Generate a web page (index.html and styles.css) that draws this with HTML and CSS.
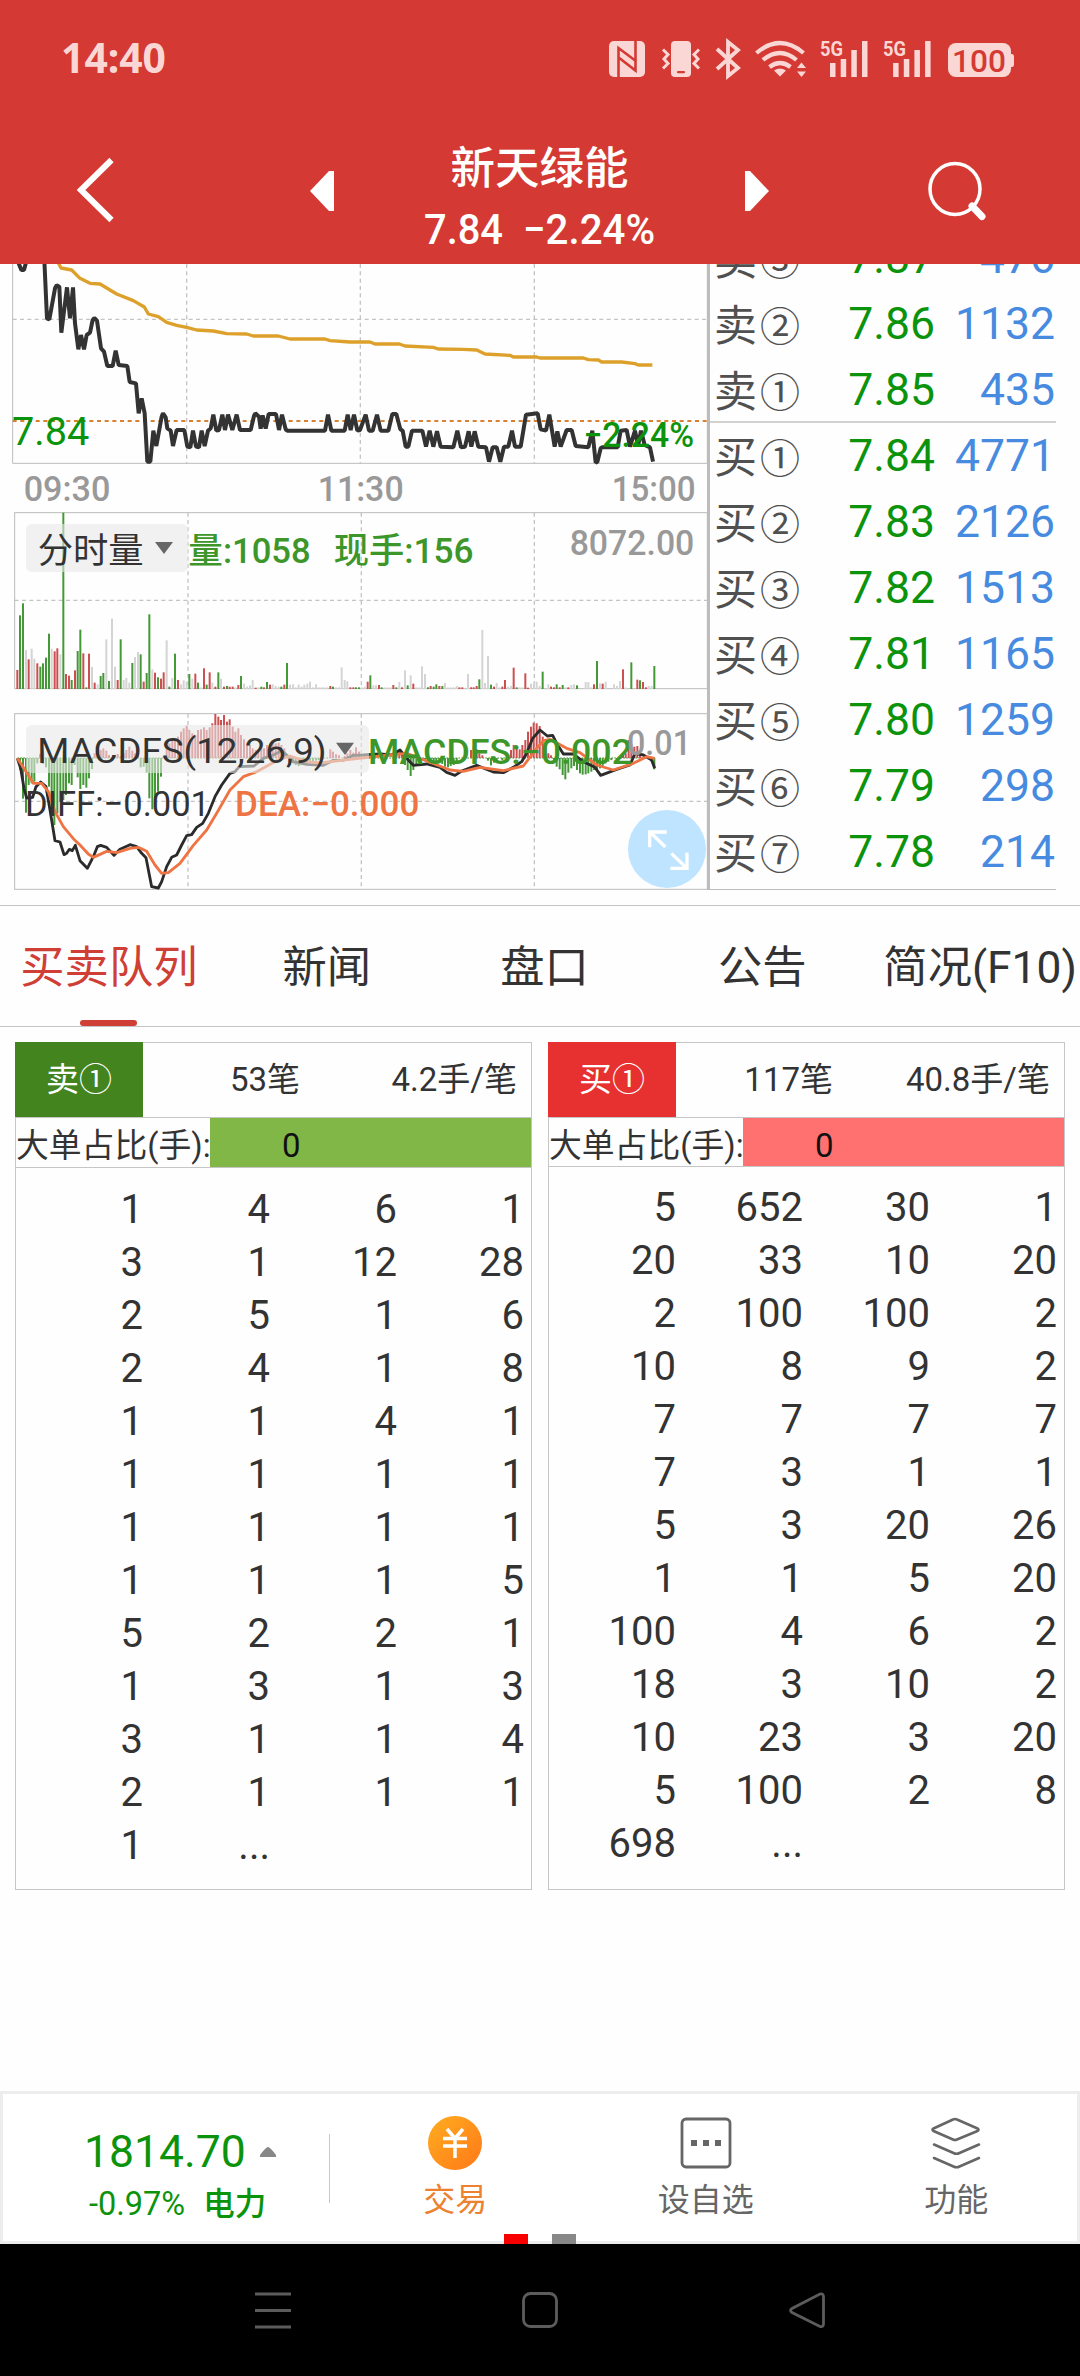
FILE: index.html
```html
<!DOCTYPE html>
<html lang="zh-CN">
<head>
<meta charset="utf-8">
<title>新天绿能</title>
<link rel="stylesheet" href="styles.css">
</head>
<body>
<div class="app">
  <header class="header">
    <div class="status">
      <svg class="clock" viewBox="0 0 110 40"><text x="0" y="32.500" textLength="105" lengthAdjust="spacingAndGlyphs">14:40</text></svg>
      <svg class="status-icons" viewBox="609 38 406 42" fill="#fad7d5">
        <rect x="609" y="41" width="36" height="36" rx="5"/>
        <path d="M618.500 77V48l18 13.500M635.500 41v29.500L618 57" fill="none" stroke="#d43a33" stroke-width="2.600"/>
        <rect x="671" y="41" width="20" height="36" rx="4"/><rect x="677" y="71" width="8" height="2.200" rx="1" fill="#d43a33"/>
        <path d="M663 49.500l5 5-4 4.500 4 4.500-5 5M699 49.500l-5 5 4 4.500-4 4.500 5 5" fill="none" stroke="#fad7d5" stroke-width="3"/>
        <path d="M717 49l21 19-10 8V42l10 8-21 19" fill="none" stroke="#fad7d5" stroke-width="3.800"/>
        <g fill="none" stroke="#fad7d5" stroke-width="4.200"><path d="M756.500 53q23.500-20 47 0M763 60q17-14 33.500 0M769.500 67q10.500-8 21 0"/></g>
        <path d="M774 70.500q6-4 12 0l-6 6z M797 68l4.500-5.500 4.500 5.500zM797 71.500l4.500 5.500 4.500-5.500z"/>
        <g id="signal"><text x="820" y="55.800" font-size="21" font-weight="700" textLength="23" lengthAdjust="spacingAndGlyphs">5G</text>
        <path d="M830 63h5.500v14H830zM840.700 59h5.500v18h-5.500zM851.300 50h5.500v27h-5.500zM862 41h5.500v36H862z"/></g>
        <use href="#signal" x="63.100"/>
        <rect x="948" y="43" width="63" height="34" rx="8"/><path d="M1010 54h2q2 0 2 2.500v7.500q0 3-2 3h-2z"/>
        <text x="952" y="71.500" font-size="32" font-weight="500" fill="#d43a33" textLength="54" lengthAdjust="spacingAndGlyphs">100</text>
      </svg>
    </div>
    <div class="title-bar">
      <svg class="back" viewBox="0 0 40 68"><path d="M36.500 4L6 34l30.500 30" fill="none" stroke="#fff" stroke-width="6"/></svg>
      <svg class="arrow" viewBox="0 0 24 40"><path d="M24 0v40h-5L0 20 19 0z" fill="#fff"/></svg>
      <div class="stock">
        <div class="stock-name">新天绿能</div>
        <svg class="stock-price" viewBox="0 0 232 40"><text x="0" y="34.500" textLength="79" lengthAdjust="spacingAndGlyphs">7.84</text><text x="99" y="34.500" textLength="132" lengthAdjust="spacingAndGlyphs">−2.24%</text></svg>
      </div>
      <svg class="arrow" viewBox="0 0 24 40"><path d="M0 0v40h5l19-20L5 0z" fill="#fff"/></svg>
      <svg class="search" viewBox="0 0 58 58"><ellipse cx="27" cy="27" rx="25" ry="25.500" fill="none" stroke="#fff" stroke-width="3.500"/><path d="M44 44l10 10.500" stroke="#fff" stroke-width="7" stroke-linecap="round"/></svg>
    </div>
  </header>

  <main class="quote">
    <section class="charts">
      <svg class="price-chart" viewBox="0 12 2130 738">
        <g class="grid"><path d="M560 12V610M1081 12V610M1603 12V610M38 178H2120"/></g>
        <path class="frame" d="M38 0V610H2122V0"/>
        <path d="M38 483H2120" fill="none" stroke="#d9812f" stroke-width="6" stroke-dasharray="12 11"/>
        <text x="36" y="555" class="quote-low" textLength="232" lengthAdjust="spacingAndGlyphs">7.84</text>
        <polyline class="average" points="170,0 183,24 215,30 240,55 270,70 300,72 350,102 400,122 433,141 445,162 475,170 500,187 530,196 560,202 590,210 640,213 680,221 740,222 760,228 835,228 870,237 975,237 990,242 1050,246 1110,246 1125,252 1198,252 1215,258 1300,262 1315,267 1390,268 1430,270 1455,282 1530,286 1540,291 1610,291 1620,294 1750,294 1765,299 1795,300 1805,306 1865,306 1905,311 1915,315 1957,315"/>
        <polyline class="price" points="52,0 64,30 72,30 80,0 133,0 141,176 148,178 165,85 170,76 178,80 184,218 201,82 210,175 219,82 225,190 235,268 243,225 252,268 260,225 270,218 278,180 283,174 291,182 303,265 312,275 322,318 338,318 347,272 356,315 382,318 389,366 408,370 416,460 425,415 434,460 442,605 451,605 460,512 469,558 485,470 489,460 497,472 502,505 512,512 519,558 530,510 553,510 562,560 571,562 579,512 588,560 597,562 605,512 614,558 624,512 632,505 640,464 649,512 657,510 667,464 675,510 684,464 697,510 710,464 720,510 752,510 762,468 766,460 777,470 782,506 788,466 797,506 806,462 828,462 837,510 846,464 857,508 862,512 975,512 984,464 994,512 1034,512 1043,464 1052,510 1062,464 1072,512 1080,510 1097,464 1107,512 1118,512 1131,464 1142,512 1165,512 1177,462 1189,462 1201,508 1208,512 1217,560 1225,560 1236,512 1267,512 1278,560 1289,512 1300,560 1311,514 1322,560 1360,562 1372,512 1383,562 1395,560 1406,514 1414,560 1424,514 1435,560 1458,562 1467,605 1478,562 1490,562 1501,605 1512,560 1525,560 1536,512 1545,560 1562,560 1578,464 1613,460 1622,508 1638,512 1648,464 1664,560 1672,514 1682,560 1700,510 1715,510 1727,558 1765,562 1777,512 1787,608 1792,606 1802,565 1807,562 1853,562 1862,512 1880,510 1890,560 1905,512 1914,558 1923,512 1934,555 1950,562 1959,605"/>
        <text x="1750" y="560" class="green medium" textLength="332" lengthAdjust="spacingAndGlyphs">−2.24%</text>
        <g class="axis"><text x="71" y="722" textLength="260" lengthAdjust="spacingAndGlyphs">09:30</text><text x="953" y="722" textLength="258" lengthAdjust="spacingAndGlyphs">11:30</text><text x="1835" y="722" textLength="252" lengthAdjust="spacingAndGlyphs">15:00</text></g>
      </svg>

      <svg class="volume-chart" viewBox="0 30 2130 570">
        <g class="grid"><path d="M564 38V566M1084 38V566M1603 38V566M44 301H2122"/></g>
        <rect class="frame" x="44" y="38" width="2078" height="528"/>
        <g id="volume-bars"></g>
        <rect class="pill" x="78" y="72" width="487" height="144"/>
        <text x="113" y="188" class="dark" font-size="106">分时量</text>
        <path d="M465 126h54l-27 36z" fill="#666"/>
        <g class="green-bright medium"><text x="565" y="188" textLength="367" lengthAdjust="spacingAndGlyphs">量:1058</text><text x="1001" y="188" textLength="420" lengthAdjust="spacingAndGlyphs">现手:156</text></g>
        <text x="1709" y="164" class="axis" textLength="374" lengthAdjust="spacingAndGlyphs">8072.00</text>
      </svg>

      <svg class="macd-chart" viewBox="0 30 2130 570">
        <g class="grid"><path d="M564 71V590M1084 71V590M1603 71V590M44 334H2122"/></g>
        <rect class="frame" x="44" y="71" width="2078" height="527"/>
        <path d="M52 204H1965" stroke="#3d9629" stroke-width="3" stroke-dasharray="5 4"/>
        <g id="macd-bars"></g>
        <polyline class="diff" points="52,205 62,235 72,295 80,324 98,322 108,290 122,276 138,290 150,360 165,452 180,456 192,494 200,490 208,478 217,482 226,466 240,512 262,535 280,500 292,470 302,466 320,472 342,496 360,478 390,464 410,470 425,490 438,503 455,590 475,594 485,575 500,530 515,502 530,495 545,465 560,437 575,434 590,412 608,400 625,370 645,320 665,285 690,250 705,245 718,230 762,228 790,205 820,195 845,182 865,200 880,215 920,223 970,226 1000,211 1030,211 1060,196 1090,195 1140,192 1175,195 1200,180 1220,205 1240,226 1280,222 1320,232 1340,247 1365,256 1385,243 1430,226 1480,246 1510,248 1540,232 1565,215 1580,190 1598,145 1620,120 1642,138 1658,136 1670,160 1690,192 1720,192 1750,215 1785,232 1802,256 1850,238 1890,225 1905,190 1930,195 1955,210 1964,235"/>
        <polyline class="dea" points="52,205 75,240 100,280 125,280 145,305 165,365 190,410 220,446 240,465 265,492 280,502 320,484 350,488 390,475 415,472 440,484 465,525 485,550 505,548 540,520 580,466 620,420 650,370 690,300 730,260 770,245 830,212 870,198 920,215 960,219 1050,208 1140,198 1220,190 1280,213 1350,240 1390,244 1440,232 1510,242 1570,228 1610,175 1630,152 1650,148 1700,175 1740,188 1790,225 1840,240 1900,220 1940,200 1964,205"/>
        <rect class="pill" x="78" y="105" width="1029" height="144"/>
        <text x="112" y="218" class="dark" textLength="868" lengthAdjust="spacingAndGlyphs">MACDFS(12,26,9)</text>
        <path d="M1008 158h54l-27 37z" fill="#666"/>
        <text x="1104" y="222" class="green-bright medium" textLength="792" lengthAdjust="spacingAndGlyphs">MACDFS:−0.002</text>
        <text x="1881" y="196" class="axis" textLength="192" lengthAdjust="spacingAndGlyphs">0.01</text>
        <text x="75" y="377" class="dark" textLength="555" lengthAdjust="spacingAndGlyphs">DIFF:−0.001</text>
        <text x="705" y="377" class="orange medium" textLength="553" lengthAdjust="spacingAndGlyphs">DEA:−0.000</text>
        <circle cx="2001" cy="477" r="117" fill="#bfe4ff"/>
        <path d="M1996 471l-46-45M1949 472v-46h51M2014 490l46 44M2061 488v47h-50" fill="none" stroke="#fff" stroke-width="10"/>
      </svg>
    </section>

    <section class="book">
      <div class="row"><span>卖<em>③</em></span><b>7.87</b><i>476</i></div>
      <div class="row"><span>卖<em>②</em></span><b>7.86</b><i>1132</i></div>
      <div class="row split"><span>卖<em>①</em></span><b>7.85</b><i>435</i></div>
      <div class="row"><span>买<em>①</em></span><b>7.84</b><i>4771</i></div>
      <div class="row"><span>买<em>②</em></span><b>7.83</b><i>2126</i></div>
      <div class="row"><span>买<em>③</em></span><b>7.82</b><i>1513</i></div>
      <div class="row"><span>买<em>④</em></span><b>7.81</b><i>1165</i></div>
      <div class="row"><span>买<em>⑤</em></span><b>7.80</b><i>1259</i></div>
      <div class="row"><span>买<em>⑥</em></span><b>7.79</b><i>298</i></div>
      <div class="row"><span>买<em>⑦</em></span><b>7.78</b><i>214</i></div>
    </section>
  </main>

  <nav class="tabs">
    <div class="tab active">买卖队列</div><div class="tab">新闻</div><div class="tab">盘口</div><div class="tab">公告</div><div class="tab">简况(F10)</div>
  </nav>

  <section class="queues">
    <article class="queue sell">
      <div class="queue-head"><span class="badge">卖①</span><span>53笔</span><span>4.2手/笔</span></div>
      <div class="ratio"><span class="ratio-label">大单占比(手):</span><span class="ratio-bar">0</span></div>
      <div class="cells">
        <span>1</span><span>4</span><span>6</span><span>1</span>
        <span>3</span><span>1</span><span>12</span><span>28</span>
        <span>2</span><span>5</span><span>1</span><span>6</span>
        <span>2</span><span>4</span><span>1</span><span>8</span>
        <span>1</span><span>1</span><span>4</span><span>1</span>
        <span>1</span><span>1</span><span>1</span><span>1</span>
        <span>1</span><span>1</span><span>1</span><span>1</span>
        <span>1</span><span>1</span><span>1</span><span>5</span>
        <span>5</span><span>2</span><span>2</span><span>1</span>
        <span>1</span><span>3</span><span>1</span><span>3</span>
        <span>3</span><span>1</span><span>1</span><span>4</span>
        <span>2</span><span>1</span><span>1</span><span>1</span>
        <span>1</span><span>...</span>
      </div>
    </article>
    <article class="queue buy">
      <div class="queue-head"><span class="badge">买①</span><span>117笔</span><span>40.8手/笔</span></div>
      <div class="ratio"><span class="ratio-label">大单占比(手):</span><span class="ratio-bar">0</span></div>
      <div class="cells">
        <span>5</span><span>652</span><span>30</span><span>1</span>
        <span>20</span><span>33</span><span>10</span><span>20</span>
        <span>2</span><span>100</span><span>100</span><span>2</span>
        <span>10</span><span>8</span><span>9</span><span>2</span>
        <span>7</span><span>7</span><span>7</span><span>7</span>
        <span>7</span><span>3</span><span>1</span><span>1</span>
        <span>5</span><span>3</span><span>20</span><span>26</span>
        <span>1</span><span>1</span><span>5</span><span>20</span>
        <span>100</span><span>4</span><span>6</span><span>2</span>
        <span>18</span><span>3</span><span>10</span><span>2</span>
        <span>10</span><span>23</span><span>3</span><span>20</span>
        <span>5</span><span>100</span><span>2</span><span>8</span>
        <span>698</span><span>...</span>
      </div>
    </article>
  </section>

  <footer class="footer">
    <div class="index">
      <div class="index-value">1814.70<svg viewBox="0 0 16 10"><path d="M8 0q2 0 8 8v2H0V8q6-8 8-8z" fill="#888"/></svg></div>
      <div class="index-change"><span>-0.97%</span><b>电力</b></div>
    </div>
    <div class="action trade">
      <svg viewBox="0 0 54 54"><defs><linearGradient id="coin" x1="0" y1="0" x2="1" y2="1"><stop offset="0" stop-color="#ffad20"/><stop offset="1" stop-color="#ff7818"/></linearGradient></defs><circle cx="27" cy="27" r="27" fill="url(#coin)"/><path d="M19 13l8 9.500 8-9.500M15 22.500h24M15 30h24M27 22v20" fill="none" stroke="#fff" stroke-width="3.500"/></svg>
      <span>交易</span>
    </div>
    <div class="action">
      <svg viewBox="0 0 54 54"><rect x="3" y="3" width="48" height="48" rx="4" fill="none" stroke="#666" stroke-width="2.800"/><path d="M12 24h6v6h-6zM24 24h6v6h-6zM36 24h6v6h-6z" fill="#666"/></svg>
      <span>设自选</span>
    </div>
    <div class="action">
      <svg viewBox="0 0 54 54" fill="none" stroke="#666" stroke-width="2.600" stroke-linejoin="round" stroke-linecap="round"><path d="M24 3.500q2-1 4 0l20.500 9q2 1 0 2.500L28 23.500q-2 1-4 0L4.500 15q-2-1.500 0-2.500zM5 28.500l19.500 8.500q3 1.500 6 0L50 28.500M5 42l19.500 8.500q3 1.500 6 0L50 42"/></svg>
      <span>功能</span>
    </div>
    <div class="pager"><i></i><i></i></div>
  </footer>

  <div class="system-nav">
    <svg viewBox="0 0 38 38"><path d="M1 3h36M1 19.500h36M1 36h36"/></svg>
    <svg viewBox="0 0 38 38"><rect x="2.500" y="2.500" width="33" height="33" rx="7"/></svg>
    <svg viewBox="0 0 38 38"><path d="M32 3q3.500-1 3.500 3v26.500q0 4-3.500 3L4 21.500q-3-2 0-4z"/></svg>
  </div>
</div>
<script src="charts.js"></script>
</body>
</html>
```
FILE: styles.css
```css
* { box-sizing: border-box; }
body { margin: 0; background: #fefefe; color: #333; font-family: Roboto, "Noto Sans CJK SC", sans-serif; }
svg { display: block; overflow: visible; flex: none; }
.app { width: 1080px; height: 2376px; display: flex; flex-direction: column; overflow: hidden; }

.header { height: 264px; flex: none; background: #d43a33; position: relative; z-index: 1; }
.status { height: 118px; display: flex; justify-content: space-between; padding: 38px 65px 0 61px; }
.clock { width: 110px; height: 40px; margin-top: 2px; font-size: 41px; font-weight: 700; fill: #fad7d5; font-family: "Noto Sans", "Open Sans", sans-serif; }
.status-icons { width: 406px; height: 42px; }
.title-bar { display: flex; height: 146px; padding: 22px 92px 0 75px; align-items: flex-start; }
.back { width: 40px; height: 68px; margin: 16px 195px 0 0; }
.arrow { width: 24px; height: 40px; margin-top: 31px; }
.stock { width: 411px; display: flex; flex-direction: column; align-items: center; }
.stock-name { color: #fff; font: 500 44.500px/50px "Noto Sans CJK SC", sans-serif; margin-bottom: 19px; }
.stock-price { width: 232px; height: 40px; font-size: 43px; font-weight: 500; fill: #fff; }
.search { width: 58px; height: 58px; margin: 22px 0 0 159px; }

.quote { height: 641px; flex: none; display: flex; }
.charts { width: 710px; flex: none; }
.price-chart { width: 710px; height: 246px; }
.volume-chart, .macd-chart { width: 710px; height: 190px; }
.charts { border-right: 3px solid #bcbcbc; height: 626px; }
.charts text { font-family: Roboto, "Noto Sans CJK SC", sans-serif; font-size: 106px; }
.charts .quote-low { font-size: 115px; fill: #0b930b; }
.grid { fill: none; stroke: #c4c4c4; stroke-width: 4; stroke-dasharray: 12 10; }
.frame { fill: none; stroke: #bcbcbc; stroke-width: 3; }
.average { fill: none; stroke: #dda02a; stroke-width: 10; stroke-linejoin: round; }
.price { fill: none; stroke: #333; stroke-width: 12; stroke-linejoin: bevel; }
.diff { fill: none; stroke: #2b2b2b; stroke-width: 8.5; stroke-linejoin: round; }
.dea { fill: none; stroke: #ee7443; stroke-width: 8.5; stroke-linejoin: round; }
.axis { fill: #999; font-weight: 500; }
.green { fill: #0b930b; }
.green-bright { fill: #3d9629; }
.dark { fill: #333; }
.orange { fill: #ee7443; }
.medium { font-weight: 500; }
.pill { fill: #e8e8e8; opacity: .6; rx: 18px; }
.up { fill: #cc5050; }
.down { fill: #459838; }
.flat { fill: #d4d4d4; }

.book { width: 346px; height: 626px; overflow: hidden; border-bottom: 1px solid #bcbcbc; }
.row { height: 66px; display: grid; grid-template-columns: 99px 123px 1fr; align-items: center; padding: 0 1px 0 4px; font-size: 44.500px; line-height: 66px; }
.row:first-child { margin-top: -39px; }
.row span { font: 400 43px/58px "Noto Sans CJK SC", sans-serif; letter-spacing: 3px; color: #505050; white-space: nowrap; height: 62px; }
.row em { font-style: normal; font-size: 40px; line-height: 1; }
.row b { font-weight: 400; color: #0b930b; text-align: right; margin-right: 1px; }
.row i { font-style: normal; color: #468be0; text-align: right; }
.split { border-bottom: 2px solid #d2d2d2; }

.tabs { height: 122px; flex: none; display: flex; overflow: hidden; border-top: 1.500px solid #c4c4c4; border-bottom: 1.500px solid #c4c4c4; }
.tab { flex: 0 0 217.800px; display: flex; flex-direction: column; align-items: center; font-size: 44.300px; line-height: 124px; height: 120px; white-space: nowrap; }
.active { color: #cf3f35; }
.active::after { content: ""; width: 57px; height: 6px; margin-top: -10px; border-radius: 3px; background: #cf3f35; }

.queues { display: flex; gap: 16px; padding: 15px 15px 0; flex: none; height: 1064px; align-items: flex-start; }
.queue { width: 517px; height: 848px; border: 1.500px solid #c6c6c6; font-size: 33px; }
.queue-head { height: 76px; margin: -1px 0 0 -1px; border-bottom: 1px solid #c6c6c6; display: grid; grid-template-columns: 128px 157px 1fr; align-items: center; text-align: right; padding-right: 14px; line-height: 75px; }
.badge { color: #fff; text-align: center; background: #43841f; }
.buy .badge { background: #e73030; }
.ratio { height: 50px; display: flex; border-bottom: 1px solid #c6c6c6; line-height: 56px; white-space: nowrap; }
.buy .ratio { height: 49px; }
.ratio-label { width: 194px; font-size: 32.800px; }
.ratio-bar { flex: 1; padding-left: 72px; background: #80b747; color: #111; }
.buy .ratio-bar { background: #ff7171; }
.cells { display: grid; grid-template-columns: repeat(4, 127px); grid-auto-rows: 53px; line-height: 53px; font-size: 40px; text-align: right; margin-top: 15px; }
.buy .cells { margin-top: 14px; }

.footer { position: relative; height: 153px; flex: none; border: 3px solid #ededed; display: flex; background: #fff; }
.index { width: 327px; flex: none; color: #0b930b; padding: 32px 0 0 81px; position: relative; }
.index::after { content: ""; position: absolute; right: 0; top: 40px; width: 1px; height: 69px; background: #c8c8c8; }
.index-value { display: flex; align-items: center; font-size: 44.500px; line-height: 52px; }
.index-value svg { width: 16px; height: 10px; margin-left: 14px; }
.index-change { font-size: 32.500px; line-height: 45px; margin-top: 4px; padding-left: 5px; display: flex; }
.index-change b { font-weight: 500; font-size: 31.500px; margin-left: 18px; }
.action { width: 250.500px; flex: none; padding-top: 22px; display: flex; flex-direction: column; align-items: center; color: #666; font-size: 32px; line-height: 40px; }
.action svg { width: 54px; height: 54px; margin-bottom: 10px; }
.trade { color: #ec8130; }
.pager { position: absolute; left: 501px; bottom: -3px; display: flex; gap: 24px; }
.pager i { width: 24px; height: 10px; background: #f80000; }
.pager i + i { background: #888; }

.system-nav { height: 132px; flex: none; background: #000; display: flex; justify-content: center; gap: 229px; padding-top: 47px; }
.system-nav svg { width: 38px; height: 38px; fill: none; stroke: #5c5c5c; stroke-width: 2.800; }
```
FILE: charts.js
```javascript
// Each entry: x centre, bar end, and a colour key (r = up, g = down, y = unchanged).
const volume = `52 510 r,60 346 g,69 310 g,78 450 y,86 478 r,95 446 y,103 476 y,112 490 r,121 500 g,129 490 g,138 473 g,147 401 g,155 446 y,164 454 r,172 445 r,181 463 y,190 38 g,198 522 r,207 527 r,215 540 g,225 511 r,233 453 g,241 389 g,250 460 r,259 562 g,267 461 r,276 501 y,284 548 r,293 553 y,302 528 g,310 519 g,319 418 y,327 543 g,336 356 y,345 500 y,353 540 r,362 418 g,371 540 y,379 534 y,388 548 y,397 489 g,405 471 y,414 456 y,422 463 g,431 545 r,440 519 g,448 343 g,457 508 y,465 518 r,474 532 g,483 536 r,491 517 r,500 421 y,508 560 g,517 534 y,525 461 g,534 540 r,543 553 y,551 541 y,560 545 y,568 522 g,577 536 y,586 521 r,594 548 g,603 562 y,612 505 r,620 554 g,629 517 r,637 548 y,646 560 r,655 517 g,663 536 y,672 560 r,681 558 g,689 560 r,698 560 r,706 562 y,715 555 r,723 528 g,732 551 y,741 560 y,750 556 y,758 540 y,767 563 r,775 562 y,784 560 g,792 562 r,801 546 g,810 554 r,818 553 y,827 558 y,836 560 y,844 560 g,853 554 r,861 489 g,870 554 y,879 553 y,887 562 y,896 554 y,905 560 y,913 554 y,922 551 y,930 545 y,939 562 y,948 553 y,956 562 y,965 562 y,973 562 y,982 562 y,991 558 r,999 560 g,1008 562 y,1017 562 y,1025 502 y,1034 540 y,1042 544 y,1051 562 r,1060 562 r,1068 562 g,1077 562 g,1085 562 y,1094 560 y,1103 545 r,1111 526 g,1120 556 y,1128 556 y,1137 555 r,1145 562 g,1154 562 y,1163 562 y,1172 562 y,1180 555 r,1189 562 g,1198 546 y,1206 562 r,1215 511 y,1223 556 g,1232 526 y,1240 551 r,1249 562 y,1258 562 y,1266 499 y,1275 522 y,1284 562 g,1292 558 r,1301 560 g,1309 553 g,1318 558 r,1327 558 g,1335 549 y,1344 562 y,1353 562 y,1361 562 y,1370 558 y,1378 562 r,1387 562 r,1404 522 y,1413 562 r,1421 562 r,1430 558 r,1438 538 g,1447 390 y,1455 549 y,1464 468 y,1473 554 g,1482 560 r,1490 549 y,1498 562 y,1507 560 r,1515 540 r,1524 560 y,1533 558 y,1541 503 r,1550 562 g,1559 562 y,1567 562 y,1576 520 r,1584 563 r,1593 551 y,1602 549 y,1610 545 y,1619 558 y,1628 515 g,1645 553 y,1653 560 r,1662 562 r,1670 553 g,1679 562 r,1688 555 g,1696 562 y,1705 562 r,1714 555 y,1722 553 y,1731 556 g,1757 546 y,1765 546 y,1774 562 y,1782 553 r,1791 483 g,1800 550 y,1808 551 r,1817 545 y,1842 553 y,1851 558 y,1860 543 y,1869 508 r,1877 562 y,1894 487 g,1912 539 r,1920 541 g,1929 546 r,1938 562 r,1946 558 y,1955 558 y,1963 498 g`;
const macd = `60 240,69 326,78 368,86 285,95 280,103 275,112 220,120 192,129 222,138 232,147 290,155 365,163 405,172 370,181 335,190 330,198 315,207 280,215 285,224 225,233 262,241 297,250 285,259 293,267 265,276 237,284 190,293 165,302 180,310 175,319 182,327 195,345 196,353 192,362 198,371 190,379 180,388 170,397 182,405 190,414 195,422 232,431 230,440 248,448 325,457 358,465 325,474 305,483 260,491 200,500 165,508 160,517 150,525 148,534 140,543 125,551 115,560 107,568 120,577 130,586 135,594 120,603 118,612 112,620 120,629 112,637 100,646 72,655 80,663 90,672 75,681 95,689 88,698 110,706 125,715 115,723 135,732 148,741 160,750 165,758 175,767 180,775 185,784 170,792 175,801 165,810 160,818 150,827 160,836 158,844 165,853 175,861 195,870 210,879 220,887 225,896 228,905 225,913 222,922 218,930 212,939 214,948 212,956 210,965 208,991 178,999 185,1008 193,1017 196,1034 198,1042 190,1051 180,1060 188,1068 172,1077 185,1085 192,1094 197,1145 199,1189 193,1198 180,1206 190,1215 225,1223 240,1232 258,1240 240,1249 225,1258 215,1266 210,1275 208,1292 210,1301 216,1309 218,1318 219,1327 222,1335 230,1344 232,1352 228,1361 225,1370 215,1413 180,1421 170,1430 178,1438 190,1447 196,1464 212,1473 226,1482 218,1490 212,1507 210,1524 195,1533 180,1541 165,1550 170,1559 178,1567 165,1576 150,1584 125,1593 110,1601 98,1610 100,1619 108,1628 140,1636 160,1645 190,1653 196,1662 210,1670 230,1679 238,1688 255,1696 268,1705 248,1714 235,1722 228,1731 240,1740 250,1748 254,1757 253,1765 250,1774 245,1782 240,1791 238,1800 235,1808 230,1817 220,1825 215,1834 210,1851 208,1869 195,1877 190,1886 150,1894 160,1903 170,1912 168,1920 190,1955 215,1963 238`;
const classes = { r: 'up', g: 'down', y: 'flat' };

function drawBar(group, x, from, to, cls) {
  const bar = document.createElementNS('http://www.w3.org/2000/svg', 'rect');
  bar.setAttribute('x', x - 3);
  bar.setAttribute('y', Math.min(from, to));
  bar.setAttribute('width', 6);
  bar.setAttribute('height', Math.abs(from - to));
  bar.setAttribute('class', cls);
  group.appendChild(bar);
}

const volumeGroup = document.getElementById('volume-bars');
volume.split(',').forEach(entry => {
  const [x, top, key] = entry.split(' ');
  drawBar(volumeGroup, +x, 567, +top, classes[key]);
});

const macdGroup = document.getElementById('macd-bars');
macd.split(',').forEach(entry => {
  const [x, end] = entry.split(' ').map(Number);
  drawBar(macdGroup, x, 204, end, end < 204 ? 'up' : 'down');
});
```
